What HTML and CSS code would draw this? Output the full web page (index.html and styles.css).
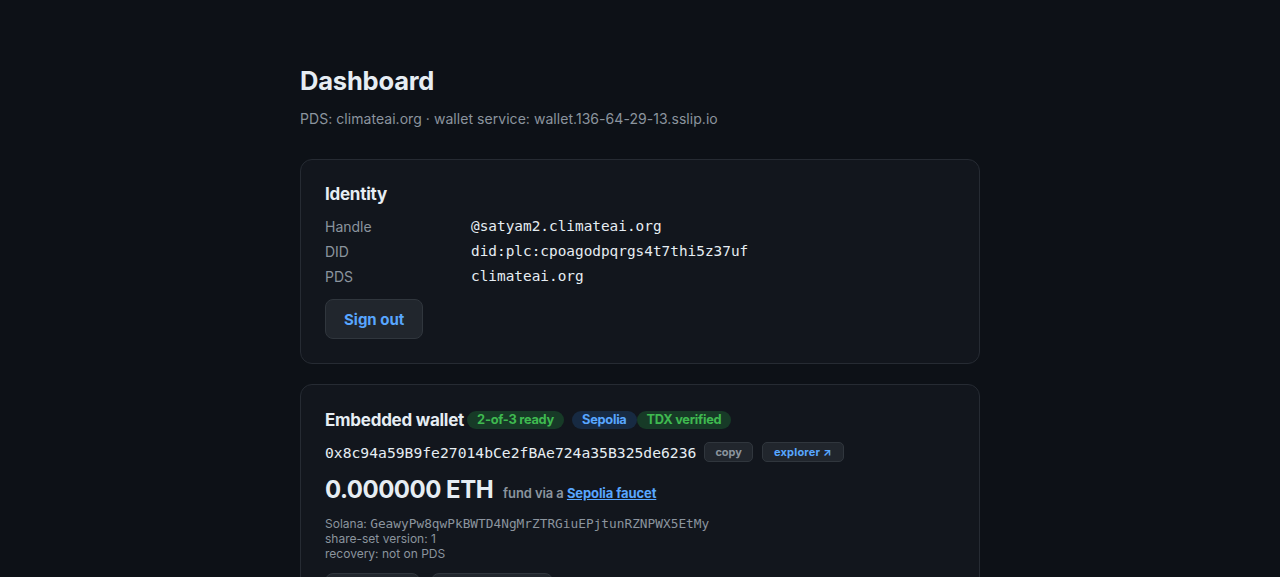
FILE: index.html
```html
<!DOCTYPE html>
<html lang="en">
<head>
  <meta charset="UTF-8">
  <meta name="viewport" content="width=device-width, initial-scale=1.0">
  <title>Dashboard</title>
  <link rel="stylesheet" href="styles.css">
</head>
<body>
  <main class="page">
    <h1 class="title">Dashboard</h1>
    <p class="sub">PDS: climateai.org · wallet service: wallet.136-64-29-13.sslip.io</p>

    <section class="card">
      <h2 class="card-title">Identity</h2>
      <div class="kv">
        <span class="k">Handle</span><span class="v mono">@satyam2.climateai.org</span>
        <span class="k">DID</span><span class="v mono">did:plc:cpoagodpqrgs4t7thi5z37uf</span>
        <span class="k">PDS</span><span class="v mono">climateai.org</span>
      </div>
      <button class="btn">Sign out</button>
    </section>

    <section class="card">
      <h2 class="card-title wallet-head">Embedded wallet
        <span class="badge green first">2-of-3 ready</span>
        <span class="badge blue">Sepolia</span><span class="badge green">TDX verified</span>
      </h2>
      <div class="addr-row">
        <span class="addr mono">0x8c94a59B9fe27014bCe2fBAe724a35B325de6236</span>
        <button class="mini">copy</button>
        <button class="mini link">explorer ↗</button>
      </div>
      <div class="bal-row">
        <span class="bal">0.000000 ETH</span>
        <span class="fund">fund via a <a href="#">Sepolia faucet</a></span>
      </div>
      <div class="meta">
        <div>Solana: <span class="mono sol">GeawyPw8qwPkBWTD4NgMrZTRGiuEPjtunRZNPWX5EtMy</span></div>
        <div>share-set version: 1</div>
        <div>recovery: not on PDS</div>
      </div>
      <div class="actions">
        <button class="btn small w1">Refresh</button>
        <button class="btn small w2">Send test tx</button>
      </div>
    </section>
  </main>
</body>
</html>
```

FILE: styles.css
```css
html, body {margin: 0; background: #0d1117;}
body {
  font-family: Inter, "Noto Sans", sans-serif;
  color: #e6edf3;
}

.page {
  width: 680px;
  margin: 0 auto;
  padding-top: 64px;
}

.title {
  margin: 0;
  font-size: 25.5px;
  line-height: 34px;
  font-weight: 700;
  letter-spacing: -0.2px;
}
.sub {
  margin: 11px 0 30px;
  font-size: 14px;
  line-height: 20px;
  color: #8b949e;
  letter-spacing: 0.05px;
}

.card {
  background: #12161d;
  border: 1px solid #262b33;
  border-radius: 12px;
  padding: 23px 24px 24px;
  margin-bottom: 20px;
}
.card-title {
  margin: 0;
  font-size: 17px;
  line-height: 22px;
  font-weight: 700;
  letter-spacing: -0.25px;
}

.mono {font-family: "DejaVu Sans Mono", "Liberation Mono", monospace;}

.kv {
  display: grid;
  grid-template-columns: 146px 1fr;
  margin-top: 9px;
  font-size: 14px;
  line-height: 25px;
}
.k {color: #8b949e;}
.v {font-size: 14.4px;}

.btn {
  font-family: inherit;
  background: #21262d;
  border: 1px solid #30363d;
  border-radius: 8px;
  color: #58a6ff;
  font-size: 15px;
  font-weight: 700;
  height: 40px;
  padding: 0 18px;
  margin-top: 10px;
}

.wallet-head {
  display: flex;
  align-items: center;
  margin-top: 1px;
}
.badge {
  display: inline-block;
  height: 18px;
  line-height: 18px;
  padding: 0 10px;
  border-radius: 9px;
  font-size: 12.8px;
  font-weight: 700;
}
.badge.first {margin-left: 3px; margin-right: 8px;}
.badge.green {background: #173a27; color: #3fb950;}
.badge.blue {background: #172a42; color: #58a6ff;}

.addr-row {
  display: flex;
  align-items: center;
  margin-top: 10px;
  height: 22px;
}
.addr {font-size: 14.7px; margin-right: 8px;}
.mini {
  font-family: inherit;
  background: #21262d;
  border: 1px solid #30363d;
  border-radius: 5px;
  color: #8b949e;
  font-size: 11px;
  font-weight: 700;
  height: 20px;
  padding: 0 10px;
  margin-right: 9px;
}
.mini.link {color: #58a6ff; padding: 0 11px; letter-spacing: 0.2px;}

.bal-row {
  display: flex;
  align-items: baseline;
  margin-top: 12px;
  line-height: 30px;
}
.bal {
  font-size: 24px;
  font-weight: 700;
  letter-spacing: -0.5px;
  margin-right: 10px;
}
.fund {
  font-size: 13px;
  font-weight: 600;
  color: #8b949e;
  letter-spacing: -0.1px;
}
.fund a {color: #58a6ff; font-weight: 700;}

.meta {
  margin-top: 8px;
  font-size: 12px;
  line-height: 15px;
  color: #8b949e;
}
.sol {font-size: 12.8px;}

.actions {
  display: flex;
  gap: 11px;
  margin-top: 12px;
}
.btn.small {margin-top: 0; font-size: 14px;}
.w1 {width: 95px;}
.w2 {width: 122px;}
```
